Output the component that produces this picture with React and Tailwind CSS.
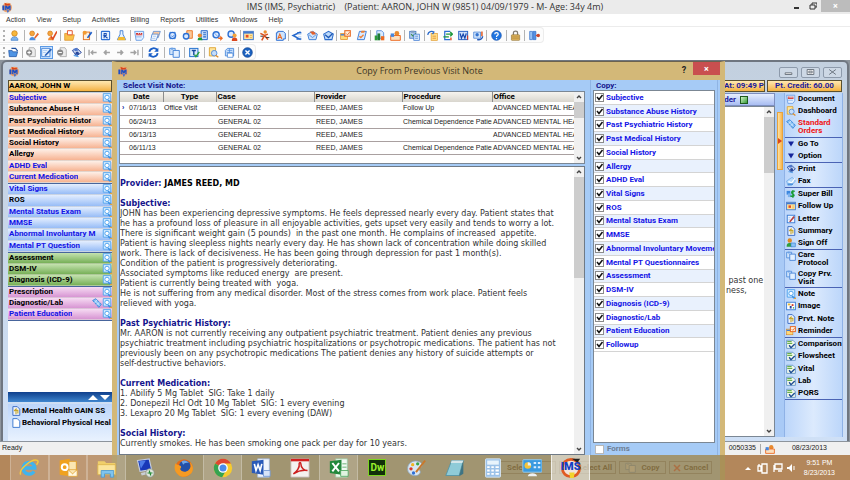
import React from "react";
import clsx from "clsx";

// 16x16 drawings shared by the toolbars, the side menu and the windows
const GLYPHS = {
  app: (
    <>
      <circle cx="9" cy="8" r="7" fill="#f2a46a" />
      <path d="M2 5h3v7H2zM6 5h3l1 3 1-3h3v7h-2V8l-1 3H9L8 8v4H6z" fill="#1d4fc4" />
      <path d="M5 1l4 2 5-1-2 3H6z" fill="#d8451c" />
      <path d="M8 12h4l-2 4z" fill="#2b6ad8" />
    </>
  ),
  person: (
    <>
      <circle cx="8" cy="5" r="4" fill="#f6b73c" stroke="#c77a12" />
      <path d="M3 15c0-4 2-5 5-5s5 1 5 5z" fill="#7db4ee" stroke="#3876c4" />
    </>
  ),
  personEdit: (
    <>
      <circle cx="6" cy="5" r="3.5" fill="#f6a53c" stroke="#d0761a" />
      <path d="M2 15c0-4 2-5 4-5s5 1 5 5z" fill="#4c8de0" />
      <path d="M9 11l5-7 2 2-6 7z" fill="#e8642a" />
    </>
  ),
  personCheck: (
    <>
      <circle cx="6" cy="5" r="3.5" fill="#f6a53c" stroke="#d0761a" />
      <path d="M3 15c0-4 2-5 4-5s4 1 4 5z" fill="#f08a34" />
      <path d="M7 9l3 4 6-11" fill="none" stroke="#df4d22" strokeWidth="2.4" />
    </>
  ),
  folder: (
    <>
      <path d="M1 5h5l1 2h8l-2 8H1z" fill="#f9c14a" stroke="#d98b1b" />
      <path d="M5 1h7v6H5z" fill="#fff" stroke="#e2552b" strokeWidth="1.4" />
    </>
  ),
  write: (
    <>
      <rect x="2" y="3" width="9" height="11" fill="#fff0dc" stroke="#e0762a" strokeWidth="1.4" />
      <circle cx="4" cy="4" r="3" fill="#f29b32" />
      <path d="M7 11l6-9 2 2-6 8z" fill="#1f5fc9" />
    </>
  ),
  rx: (
    <>
      <rect x="2" y="2" width="12" height="12" rx="1" fill="#e4f0ff" stroke="#2d70d4" strokeWidth="1.5" />
      <path d="M6 12V5h3v3H6l5 4" fill="none" stroke="#1b50b4" strokeWidth="1.5" />
    </>
  ),
  flask: (
    <>
      <path d="M6 1h4v5l4 8H2l4-8z" fill="#e6f2ff" stroke="#3a7ad4" strokeWidth="1.3" />
      <path d="M4 10h8l2 5H2z" fill="#f5b92e" />
    </>
  ),
  doc: (
    <>
      <path d="M1 2h13v9l-3 4H3z" fill="#e3efff" stroke="#5c94e0" strokeWidth="1.2" />
      <path d="M3 5h3M7 5h2M10 5h2M3 7h9" stroke="#d6342d" strokeWidth="1.6" />
      <path d="M3 10h8" stroke="#6c9fe4" />
    </>
  ),
  papers: (
    <>
      <path d="M5 2h10l-3 9H2z" fill="#f9c9a0" stroke="#3a7ad4" />
      <path d="M3 6h9l-3 9H1z" fill="#fff" stroke="#3a7ad4" />
      <path d="M4 9h5M3 12h5" stroke="#7aa9e6" />
    </>
  ),
  ring: (
    <>
      <path d="M4 3l8 10M12 3L4 13" stroke="#6ea4ea" strokeWidth="2.4" />
      <circle cx="8" cy="8" r="4.500" fill="#d9e9ff" stroke="#2d70d4" strokeWidth="2" />
      <path d="M6 8l2 2 3-3" fill="none" stroke="#2d70d4" strokeWidth="1.2" />
    </>
  ),
  ringPages: (
    <>
      <path d="M7 1h8v11H7z" fill="#fbc998" stroke="#ec7a2a" strokeWidth="1.4" />
      <circle cx="6" cy="9" r="4" fill="#d9e9ff" stroke="#2d70d4" strokeWidth="2" />
    </>
  ),
  ringArrow: (
    <>
      <circle cx="6" cy="7" r="4.500" fill="#d9e9ff" stroke="#2d70d4" strokeWidth="2" />
      <path d="M3 4l6 6" stroke="#6ea4ea" strokeWidth="1.4" />
      <path d="M9 11h3V8l4 4-4 4v-3H9z" fill="#ec6a22" />
    </>
  ),
  ringPerson: (
    <>
      <circle cx="6" cy="6" r="4.500" fill="#d9e9ff" stroke="#2d70d4" strokeWidth="2" />
      <circle cx="11" cy="8" r="3" fill="#f2a23c" />
      <path d="M7 16c0-4 1-5 4-5s4 1 4 5z" fill="#d9471f" />
    </>
  ),
  personChart: (
    <>
      <path d="M6 1h9v13H6z" fill="#cfe1fb" stroke="#2767c8" strokeWidth="1.4" />
      <path d="M9 4h4M9 7h4M9 10h4" stroke="#2767c8" strokeWidth="1.5" />
      <circle cx="4" cy="8" r="3" fill="#ec8a2d" />
      <path d="M1 15c0-3 1-4 3-4s4 1 4 4z" fill="#1d9b37" />
    </>
  ),
  calendar: (
    <>
      <rect x="1" y="2" width="14" height="12" fill="#ffe39a" stroke="#4179cf" strokeWidth="1.4" />
      <path d="M1 4h14" stroke="#4179cf" strokeWidth="2.5" />
      <rect x="4" y="7" width="4" height="4" fill="#e64b22" />
      <path d="M10 8h3M10 11h3" stroke="#e3a43a" />
    </>
  ),
  runner: (
    <>
      <circle cx="9" cy="3" r="2.5" fill="#ee8f30" />
      <path d="M2 5l6 3 5-2M8 8l-4 7M8 8l5 6" stroke="#d9511f" strokeWidth="2.2" fill="none" />
      <path d="M2 9h4M10 11h5" stroke="#333" strokeWidth="1.4" />
    </>
  ),
  letterA: (
    <>
      <path d="M4 2h8l3 3v8h-3v2H2V4h2z" fill="#cfe3fb" stroke="#2c6ed2" strokeWidth="1.4" />
      <path d="M4 13l3-7 3 7M5 11h4" stroke="#ec6a22" strokeWidth="1.6" fill="none" />
    </>
  ),
  chevron: (
    <>
      <path d="M14 3L3 8l11 6M9 4h6M8 13h7" fill="none" stroke="#2568cc" strokeWidth="2.2" />
      <path d="M10 6h5M10 10h5" stroke="#a5c8f4" strokeWidth="1.4" />
    </>
  ),
  envelope: (
    <>
      <path d="M1 6l7-4 7 4-2 8H3z" fill="#cfe3fb" stroke="#3477d2" strokeWidth="1.3" />
      <path d="M3 7l5 4 5-4" fill="none" stroke="#3477d2" />
      <path d="M4 2h6l3 4-5 1z" fill="#e5602a" />
    </>
  ),
  blueEnvelope: (
    <>
      <path d="M1 6l7-4 7 4-2 8H3z" fill="#bcd9fa" stroke="#2b6bcb" strokeWidth="1.5" />
      <path d="M3 7l5 4 6-6" fill="none" stroke="#1f58b4" strokeWidth="1.8" />
    </>
  ),
  reminder: (
    <>
      <rect x="1" y="5" width="10" height="9" fill="#ffd978" stroke="#d98823" />
      <path d="M1 7h10" stroke="#3d7bd6" strokeWidth="2" />
      <rect x="7" y="1" width="8" height="8" fill="#fff2e2" stroke="#e76a25" strokeWidth="1.6" />
      <path d="M9 5l2 2 3-4" fill="none" stroke="#e76a25" strokeWidth="1.3" />
    </>
  ),
  orangeDoc: (
    <>
      <path d="M5 2h10l-3 12H2z" fill="#d9e9ff" stroke="#3f7fd6" strokeWidth="1.4" />
      <path d="M8 1h5l-1 3H7z" fill="#ef7f33" />
      <path d="M5 9l2 2 4-4" fill="none" stroke="#ef7f33" strokeWidth="1.8" />
    </>
  ),
  chart: (
    <>
      <path d="M4 1h7l3 3v8H4z" fill="#d9e9ff" stroke="#3271cf" />
      <path d="M1 15V8h4v7z" fill="#2d9b3a" />
      <path d="M5 15V5h4v10z" fill="#1d7b37" />
      <path d="M10 15V9h5v6z" fill="#ec6a22" />
    </>
  ),
  sign: (
    <>
      <circle cx="10" cy="5" r="3.500" fill="#e88a2e" />
      <path d="M1 8h14v7H1z" fill="#fbe0c0" stroke="#ec6a22" strokeWidth="1.400" />
      <path d="M1 5h5v5H1z" fill="#4687de" />
    </>
  ),
  clipboard: (
    <>
      <rect x="1" y="2" width="9" height="10" fill="#b4cdee" stroke="#4d7fc4" strokeWidth="1.300" />
      <rect x="3" y="1" width="5" height="3" fill="#7e9bc0" />
      <path d="M3 6l3 3 4-4" fill="none" stroke="#3d8f4a" strokeWidth="1.500" />
      <rect x="7" y="6" width="8" height="9" fill="#d5e7fc" stroke="#2f70cf" />
      <path d="M9 9h4M9 12h4" stroke="#2f70cf" />
    </>
  ),
  importDoc: (
    <>
      <rect x="6" y="5" width="9" height="10" fill="#ffe08a" stroke="#e29a28" />
      <path d="M1 7c1-5 6-6 9-4L8 6" fill="none" stroke="#2b6bcb" strokeWidth="2" />
      <path d="M8 9h5M8 12h5" stroke="#d97d22" />
    </>
  ),
  swap: (
    <>
      <path d="M12 2H4v12h8" fill="none" stroke="#2d70d4" strokeWidth="1.800" />
      <path d="M6 6h8M2 10h8M12 3l3 3-3 3" fill="none" stroke="#1c963a" strokeWidth="2" />
      <path d="M13 11v4" stroke="#e04c22" strokeWidth="2" />
    </>
  ),
  word: (
    <>
      <rect x="1" y="2" width="13" height="12" fill="#cfe1fb" stroke="#2a62c4" strokeWidth="1.4" />
      <path d="M3 5l2 7 2.500-6 2.500 6 2-7" fill="none" stroke="#1747ac" strokeWidth="1.8" />
      <path d="M14 8v6" stroke="#d83a22" strokeWidth="1.6" />
    </>
  ),
  fee: (
    <>
      <path d="M1 3h10v9H1z" fill="#cfe3fb" stroke="#3474d0" />
      <circle cx="6" cy="7" r="2.5" fill="#3474d0" />
      <path d="M13 9V2" stroke="#e35c24" strokeWidth="2.2" />
      <path d="M6 14c5 1 8-2 8-5" fill="none" stroke="#2458b8" strokeWidth="2" />
    </>
  ),
  help: (
    <>
      <circle cx="8" cy="8" r="7" fill="#1f74e0" stroke="#1450ae" />
      <path d="M5.500 6c0-3 5-3 5 0 0 2-2.500 1.500-2.500 4M8 11.500v2" fill="none" stroke="#fff" strokeWidth="1.8" />
    </>
  ),
  lock: (
    <>
      <path d="M5 8V4c0-3 6-3 6 0v4" fill="none" stroke="#7f7a70" strokeWidth="1.8" />
      <rect x="2" y="7" width="12" height="8" rx="1" fill="#e0b45c" stroke="#94763a" />
      <path d="M3 10h10M3 12h10" stroke="#b08a3c" />
    </>
  ),
  exit: (
    <>
      <path d="M1 2h4v12H1z" fill="#9cc4f4" stroke="#2b6bcb" />
      <path d="M6 2h4v12H6z" fill="#5591e2" stroke="#2b6bcb" />
      <path d="M10 8h3" stroke="#e04c22" strokeWidth="2" />
      <circle cx="13.500" cy="8" r="2.500" fill="#c9472c" />
    </>
  ),
  openBlue: (
    <>
      <path d="M1 5h5l1 2h7l-2 7H2z" fill="#4f94e4" stroke="#1c4f9f" />
      <path d="M5 2h6l3 4" fill="none" stroke="#1c4f9f" strokeWidth="1.6" />
    </>
  ),
  grayPlus: (
    <>
      <path d="M6 1h7l2 3v10H6z" fill="#ececec" stroke="#9b9b9b" />
      <circle cx="6" cy="8" r="4.500" fill="#8a8a8a" />
      <path d="M3.500 8h5M6 5.500v5" stroke="#fff" strokeWidth="1.5" />
    </>
  ),
  grayMinus: (
    <>
      <path d="M6 1h7l2 3v10H6z" fill="#ececec" stroke="#9b9b9b" />
      <circle cx="6" cy="8" r="4.500" fill="#8a8a8a" />
      <path d="M3.500 8h5" stroke="#fff" strokeWidth="1.5" />
    </>
  ),
  edit: (
    <>
      <path d="M1 2h12v12H1z" fill="#e9f3ff" stroke="#4484d8" strokeWidth="1.3" />
      <path d="M3 5h6M3 8h4" stroke="#94bcec" />
      <path d="M5 12L14 2l2 2-9 9z" fill="#2c63b8" />
    </>
  ),
  print: (
    <>
      <path d="M2 5l7-3 6 6-7 5z" fill="#d4def0" stroke="#27479c" strokeWidth="1.4" />
      <path d="M3 3l5-2 3 4-5 1z" fill="#4f78cc" />
      <circle cx="9" cy="9" r="2.500" fill="#27479c" />
      <path d="M4 12l7 2" stroke="#59a0e8" strokeWidth="2" />
    </>
  ),
  first: <path d="M3 4v8M14 8H6M9 5L6 8l3 3" fill="none" stroke="#a2a2a2" strokeWidth="2" />,
  prev: <path d="M13 8H5M8 5L5 8l3 3" fill="none" stroke="#a2a2a2" strokeWidth="2.4" />,
  next: <path d="M3 8h8M8 5l3 3-3 3" fill="none" stroke="#a2a2a2" strokeWidth="2.4" />,
  last: <path d="M13 4v8M2 8h8M7 5l3 3-3 3" fill="none" stroke="#a2a2a2" strokeWidth="2" />,
  refresh: (
    <>
      <path d="M2 7c1-6 9-7 12-2M14 9c-1 6-9 7-12 2" fill="none" stroke="#1a5fc8" strokeWidth="2.6" />
      <path d="M15 1v6H9zM1 15V9h6z" fill="#1a5fc8" />
    </>
  ),
  copy: (
    <>
      <path d="M1 2h8v9H1z" fill="#cfe3fb" stroke="#4a8adb" strokeWidth="1.3" />
      <path d="M6 5h9v10H6z" fill="#e3f0ff" stroke="#3c7dd4" strokeWidth="1.3" />
      <path d="M3 1h3v3H3z" fill="#6ea3e6" />
    </>
  ),
  template: (
    <>
      <rect x="1" y="2" width="12" height="12" fill="#dceafc" stroke="#1f6fcd" strokeWidth="1.4" />
      <path d="M4 5h6M7 5v7" stroke="#14489c" strokeWidth="2" />
      <path d="M8 11l2 3 5-7" fill="none" stroke="#27a03a" strokeWidth="2" />
    </>
  ),
  dash: (
    <>
      <path d="M2 1h9v12H2z" fill="#ffe59a" stroke="#dca32f" strokeWidth="1.3" />
      <circle cx="9" cy="9" r="4" fill="#c6defa" stroke="#4b88da" strokeWidth="1.3" />
      <path d="M11 12l4 3" stroke="#e08c25" strokeWidth="2" />
    </>
  ),
  globeDoc: (
    <>
      <path d="M5 2h9v11H2V5z" fill="#c3dcfa" stroke="#4c8adb" strokeWidth="1.3" />
      <path d="M5 5h7M4 8h8M8 2v6" stroke="#4c8adb" />
      <path d="M5 9h8v6H5z" fill="#fff" stroke="#3c7dd4" />
    </>
  ),
  closeBall: (
    <>
      <circle cx="8" cy="8" r="7" fill="#1b62c0" stroke="#0d3f8c" />
      <path d="M5 5l6 6M11 5l-6 6" stroke="#fff" strokeWidth="2" />
    </>
  ),
  note: (
    <>
      <path d="M2 1h12v12H2z" fill="#d5ecff" stroke="#4aa0ee" strokeWidth="1.4" />
      <circle cx="8" cy="7" r="3.500" fill="#fff" stroke="#4aa0ee" strokeWidth="1.5" />
      <path d="M10 11l2 3h3" stroke="#3a8fe4" strokeWidth="2.400" fill="none" />
      <path d="M13 15h3" stroke="#e6a43a" strokeWidth="2" />
    </>
  ),
  capsule: (
    <>
      <path d="M1 4l5-3 9 9-4 5z" fill="#7cb9f2" stroke="#2f7fd6" strokeWidth="1.2" />
      <path d="M5 4l7 8M8 3l-4 5M12 7l-5 4" stroke="#e4f2ff" strokeWidth="1.1" />
    </>
  ),
  down: <path d="M2 3h12L8 13z" fill="#14249a" />,
  fax: (
    <>
      <path d="M1 8l9-6 5 6-6 7H3z" fill="#b9dbfb" stroke="#5f9fe4" />
      <path d="M4 9l5 2 5-7" fill="none" stroke="#fff" strokeWidth="1.8" />
      <path d="M3 13h8" stroke="#2d7bd2" strokeWidth="2" />
    </>
  ),
  bill: (
    <>
      <path d="M1 3h6v6H1z" fill="#3b86df" />
      <path d="M3 7h6v6H3z" fill="#7db2ee" />
      <path d="M14 4c-4-3-7 2-3 4s1 5-4 3M11 2v12" fill="none" stroke="#179c34" strokeWidth="2.200" />
    </>
  ),
  letter: (
    <>
      <rect x="2" y="2" width="12" height="12" fill="#f0f6ff" stroke="#3c7dd4" strokeWidth="1.5" />
      <path d="M5 12l7-9 2 2-7 8z" fill="#b53e3e" />
      <path d="M4 6h3M4 9h2" stroke="#86afe6" />
    </>
  ),
  summary: (
    <>
      <path d="M3 1h7l4 4v10H3z" fill="#eef4ff" stroke="#2d62c0" strokeWidth="1.4" />
      <path d="M5 8l3-3v8M8 7h3v5" fill="none" stroke="#c4a62c" strokeWidth="1.8" />
    </>
  ),
  signOff: (
    <>
      <circle cx="6" cy="4" r="3.500" fill="#e08a24" />
      <path d="M1 14c0-5 2-6 5-6s4 1 4 6z" fill="#2f9e3c" />
      <path d="M8 8h7v6H8z" fill="#8ac3f5" stroke="#3a7fd6" />
    </>
  ),
  image: (
    <>
      <rect x="1" y="2" width="14" height="12" fill="#fff" stroke="#3c7dd4" strokeWidth="1.5" />
      <path d="M3 4h4v3H3z" fill="#e9b830" />
      <path d="M9 5h3v3H9z" fill="#d43d2c" />
      <path d="M6 8h3v4H6z" fill="#243e9c" />
      <path d="M11 10h2v2h-2z" fill="#31a04a" />
    </>
  ),
  sheet: (
    <>
      <path d="M1 2h10l4 4v9H1z" fill="#f2f9ec" stroke="#5a8fc4" strokeWidth="1.3" />
      <path d="M2 4h7M2 7h8" stroke="#69b04c" strokeWidth="1.8" />
      <path d="M5 10l3 4 6-6" fill="none" stroke="#1d4b94" strokeWidth="2.200" />
    </>
  ),
  page: <path d="M3 1h7l4 4v10H3z" fill="#fff" stroke="#3a78d0" strokeWidth="1.5" />,
};

function Glyph({ name, className = "size-[11px]" }) {
  return (
    <svg viewBox="0 0 16 16" className={clsx("shrink-0", className)} aria-hidden="true">
      {GLYPHS[name]}
    </svg>
  );
}

const MENUS = ["Action", "View", "Setup", "Activities", "Billing", "Reports", "Utilities", "Windows", "Help"];

const MAIN_TOOLS = [
  { width: "w-[20px]", icons: ["person"] },
  { width: "w-[36px]", icons: ["personEdit", "personCheck"] },
  { width: "w-[36px]", icons: ["folder", "write"] },
  { width: "w-[34px]", icons: ["rx", "flask"] },
  { width: "w-[34px]", icons: ["doc", "papers"] },
  { width: "w-[76px]", icons: ["ring", "ringPages", "personChart", "ringArrow", "ringPerson"] },
  { width: "w-[48px]", icons: ["calendar", "runner", "letterA"] },
  { width: "w-[48px]", icons: ["chevron", "envelope", "blueEnvelope"] },
  { width: "w-[34px]", icons: ["reminder", "orangeDoc"] },
  { width: "w-[34px]", icons: ["chart", "sign"] },
  { width: "w-[20px]", icons: ["clipboard"] },
  { width: "w-[62px]", icons: ["importDoc", "swap", "word", "fee"] },
  { width: "w-[20px]", icons: ["help"] },
  { width: "w-[18px]", icons: ["lock"] },
  { width: "w-[18px]", icons: ["exit"] },
];

const NOTE_TOOLS = [
  { width: "w-[18px]", icons: ["openBlue"] },
  { width: "w-[62px]", icons: ["grayPlus", "edit", "grayMinus", "print"] },
  { width: "w-[58px]", icons: ["first", "prev", "next", "last"] },
  { width: "w-[22px]", icons: ["refresh"] },
  { width: "w-[20px]", icons: ["copy"] },
  { width: "w-[20px]", icons: ["template"] },
  { width: "w-[34px]", icons: ["dash", "globeDoc"] },
  { width: "w-[16px]", icons: ["closeBall"] },
];

const SECTIONS = [
  {
    height: "h-[91px]",
    shade: "from-[#fdf0e8] to-[#f6b392]",
    items: [
      ["Subjective", true],
      ["Substance Abuse H"],
      ["Past Psychiatric Histor"],
      ["Past Medical History"],
      ["Social History"],
      ["Allergy"],
      ["ADHD Eval", true],
      ["Current Medication", true],
    ],
  },
  {
    height: "h-[69px]",
    shade: "from-[#e4eefe] to-[#97bcf6]",
    items: [
      ["Vital Signs", true],
      ["ROS"],
      ["Mental Status Exam", true],
      ["MMSE", true],
      ["Abnormal Involuntary M", true],
      ["Mental PT Question", true],
    ],
  },
  {
    height: "h-[34px]",
    shade: "from-[#c5e2af] to-[#77b057]",
    items: [["Assessment"], ["DSM-IV"], ["Diagnosis (ICD-9)"]],
  },
  {
    height: "h-[34px]",
    shade: "from-[#f6dcf3] to-[#d795d3]",
    items: [["Prescription"], ["Diagnostic/Lab"], ["Patient Education", true]],
  },
];

const SIDE_MENU = [
  { height: "h-[45px]", items: [["doc", "Document"], ["dash", "Dashboard"], ["capsule", "Standard Orders", "tall"]] },
  { height: "h-[25px]", items: [["down", "Go To"], ["down", "Option"]] },
  { height: "h-[25px]", items: [["print", "Print"], ["fax", "Fax"]] },
  {
    height: "h-[62px]",
    items: [["bill", "Super Bill"], ["calendar", "Follow Up"], ["letter", "Letter"], ["summary", "Summary"], ["signOff", "Sign Off"]],
  },
  { height: "h-[38px]", items: [["copy", "Care Protocol", "tall"], ["copy", "Copy Prv. Visit", "tall"]] },
  { height: "h-[50px]", items: [["note", "Note"], ["image", "Image"], ["summary", "Prvt. Note"], ["reminder", "Reminder"]] },
  {
    height: "h-[62px]",
    items: [["sheet", "Comparison"], ["sheet", "Flowsheet"], ["sheet", "Vital"], ["sheet", "Lab"], ["sheet", "PQRS"]],
  },
];

const VISITS = [
  { date: "07/16/13", type: "Office Visit", procedure: "Follow Up", current: true },
  { date: "06/24/13", type: "", procedure: "Chemical Dependence Patier" },
  { date: "06/13/13", type: "", procedure: "" },
  { date: "06/11/13", type: "", procedure: "Chemical Dependence Patier" },
];

const COPY_ITEMS = [
  "Subjective",
  "Substance Abuse History",
  "Past Psychiatric History",
  "Past Medical History",
  "Social History",
  "Allergy",
  "ADHD Eval",
  "Vital Signs",
  "ROS",
  "Mental Status Exam",
  "MMSE",
  "Abnormal Involuntary Movemer",
  "Mental PT Questionnaires",
  "Assessment",
  "DSM-IV",
  "Diagnosis (ICD-9)",
  "Diagnostic/Lab",
  "Patient Education",
  "Followup",
];

const NOTE = [
  {
    title: "Subjective:",
    lines: [
      "JOHN has been experiencing depressive symptoms. He feels depressed nearly every day. Patient states that",
      "he has a profound loss of pleasure in all enjoyable activities, gets upset very easily and tends to worry a lot.",
      "There is significant weight gain (5 pounds)  in the past one month. He complains of increased  appetite.",
      "Patient is having sleepless nights nearly every day. He has shown lack of concentration while doing skilled",
      "work. There is lack of decisiveness. He has been going through depression for past 1 month(s).",
      "Condition of the patient is progressively deteriorating.",
      "Associated symptoms like reduced energy  are present.",
      "Patient is currently being treated with  yoga.",
      "He is not suffering from any medical disorder. Most of the stress comes from work place. Patient feels",
      "relieved with yoga.",
    ],
  },
  {
    title: "Past Psychiatric History:",
    lines: [
      "Mr. AARON is not currently receiving any outpatient psychiatric treatment. Patient denies any previous",
      "psychiatric treatment including psychiatric hospitalizations or psychotropic medications. The patient has not",
      "previously been on any psychotropic medications The patient denies any history of suicide attempts or",
      "self-destructive behaviors.",
    ],
  },
  {
    title: "Current Medication:",
    lines: [
      "1. Abilify 5 Mg Tablet  SIG: Take 1 daily",
      "2. Donepezil Hcl Odt 10 Mg Tablet  SIG: 1 every evening",
      "3. Lexapro 20 Mg Tablet  SIG: 1 every evening (DAW)",
    ],
  },
  {
    title: "Social History:",
    lines: ["Currently smokes. He has been smoking one pack per day for 10 years."],
  },
];

function Toolbar({ groups, active }) {
  return (
    <div className="flex h-[16px] w-fit items-center rounded-r-sm border border-l-0 border-[#ececec] bg-[#fcfcfc] pl-[3px]">
      <span className="h-[11px] border-l-2 border-dotted border-[#b0b0b0]" />
      {groups.map((group, i) => (
        <div
          key={i}
          className={clsx(
            "flex h-[11px] items-center justify-around",
            group.width,
            i < groups.length - 1 && "border-r border-[#b4b4b4]"
          )}
        >
          {group.icons.map((icon, j) => (
            <button
              key={j}
              type="button"
              aria-label={icon}
              className={clsx(icon === active && "border border-[#5b9be6] bg-[#cfe5ff]")}
            >
              <Glyph name={icon} />
            </button>
          ))}
        </div>
      ))}
    </div>
  );
}

function Arrow({ up }) {
  return (
    <svg viewBox="0 0 10 10" className="size-[10px] shrink-0" aria-hidden="true">
      <path d={up ? "M3 6l2-2 2 2" : "M3 4l2 2 2-2"} fill="none" stroke="#444" strokeWidth="1.4" />
    </svg>
  );
}

function Scrollbar({ thumb }) {
  return (
    <div className="flex w-[10px] shrink-0 flex-col bg-[#f0f0f0]">
      <Arrow up />
      <div className={clsx("bg-[#cdcdcd]", thumb)} />
      <div className="flex-1" />
      <Arrow />
    </div>
  );
}

function Tick({ id, checked, faded }) {
  return (
    <span className="grid size-[9px] shrink-0">
      <input
        id={id}
        type="checkbox"
        defaultChecked={checked}
        className={clsx(
          "peer col-start-1 row-start-1 size-[9px] appearance-none border bg-white",
          faded ? "border-[#b8b8b8]" : "border-[#8a8a8a]"
        )}
      />
      <svg viewBox="0 0 9 9" className="pointer-events-none invisible col-start-1 row-start-1 size-[9px] peer-checked:visible">
        <path d="M2 4l2 2.500L7.500 2" fill="none" stroke="#111" strokeWidth="1.500" />
      </svg>
    </span>
  );
}

function SectionNav() {
  return (
    <aside className="flex w-[104px] shrink-0 flex-col">
      <div className="h-[12px] border border-[#5a5030] bg-linear-to-b from-[#ffe9b0] to-[#f3b13c] leading-[10px] whitespace-nowrap text-black">
        AARON, JOHN W
      </div>
      <nav className="mt-px flex flex-1 flex-col bg-white">
        {SECTIONS.map((section) => (
          <div key={section.shade} className={clsx("grid auto-rows-fr border-b border-[#47659c]", section.height)}>
            {section.items.map(([label, filled]) => (
              <a
                key={label}
                href="#"
                className={clsx(
                  "flex items-center justify-between border-b border-black/10 bg-linear-to-b pl-px",
                  section.shade,
                  filled ? "text-[#1414e6]" : "text-black"
                )}
              >
                <span className="max-w-[92px] overflow-hidden leading-[10px] whitespace-nowrap">{label}</span>
                <span className="flex">
                  {label === "Diagnostic/Lab" && <Glyph name="capsule" className="size-[10px]" />}
                  <Glyph name="note" className="size-[10px]" />
                </span>
              </a>
            ))}
          </div>
        ))}
      </nav>
      <div className="flex h-[10px] items-center justify-end bg-linear-to-b from-[#0f3f8c] to-[#3f86cf] pr-[2px]">
        <svg viewBox="0 0 22 6" className="h-[6px] w-[22px]" aria-hidden="true">
          <path d="M0 6l5-5 5 5zM12 1h10l-5 5z" fill="#fff" />
        </svg>
      </div>
      <div className="mt-[2px] flex h-[37px] flex-col gap-px bg-linear-to-b from-[#bdd6fa] to-[#e9f2fe] pt-px pl-[3px] leading-[11px] text-black">
        <a href="#" className="flex items-center gap-px whitespace-nowrap">
          <Glyph name="summary" className="size-[10px]" />
          Mental Health GAIN SS
        </a>
        <a href="#" className="flex items-center gap-px whitespace-nowrap">
          <Glyph name="page" className="size-[10px]" />
          Behavioral Physical Heal
        </a>
      </div>
    </aside>
  );
}

function SideMenu() {
  return (
    <aside className="flex w-[67px] shrink-0 bg-[#a9caf6]">
      <div className="w-[9px] shrink-0 pt-[19px] pl-[2px]">
        <div className="flex h-[58px] w-[6px] items-center border border-[#e8a33c] bg-linear-to-r from-[#ffe2a0] to-[#f7b54a]">
          <svg viewBox="0 0 4 6" className="h-[6px] w-[4px]" aria-hidden="true">
            <path d="M0 0l4 3-4 3z" fill="#d8451c" />
          </svg>
        </div>
      </div>
      <nav className="flex-1 border-x border-[#8fb2e6] bg-linear-to-r from-[#bcd6fa] via-[#dceafd] to-[#bcd6fa]">
        {SIDE_MENU.map((group, i) => (
          <div key={i} className={clsx("flex flex-col border-b border-[#4a63b4]", group.height)}>
            {group.items.map(([icon, label, tall]) => (
              <a
                key={label}
                href="#"
                className={clsx(
                  "flex gap-[2px] pl-px leading-[8px]",
                  tall ? "flex-3 items-start pt-px" : "flex-2 items-center",
                  label === "Standard Orders" ? "text-[#f01414]" : "text-black"
                )}
              >
                <Glyph name={icon} className={icon === "down" ? "mx-px size-[8px]" : "size-[10px]"} />
                <span className={tall ? "w-[38px]" : "whitespace-nowrap"}>{label}</span>
              </a>
            ))}
          </div>
        ))}
      </nav>
    </aside>
  );
}

function ChartWindow() {
  return (
    <section className="flex flex-1 flex-col rounded-t-md border-2 border-b-0 border-[#6f7680] bg-linear-to-b from-[#c3d0df] to-[#cfe0f6] px-[5px] font-bold">
      <header className="flex h-[18px] shrink-0 items-center justify-between">
        <Glyph name="app" />
        <div className="flex gap-[3px] pt-[2px]">
          {["M5 7h8v2H5z", "M5 3h8v6H5zM7 5h4v2H7z", "M5 3l8 6M13 3l-8 6"].map((d) => (
            <button
              key={d}
              type="button"
              aria-label="window control"
              className="flex h-[11px] w-[19px] items-center justify-center rounded-xs border border-[#8d9aab] bg-[#cdd8e5]"
            >
              <svg viewBox="0 0 18 12" className="h-[10px] w-[15px]">
                <path d={d} fill="#f4f4f4" stroke="#5c6570" />
              </svg>
            </button>
          ))}
        </div>
      </header>
      <div className="flex flex-1">
        <SectionNav />
        <div className="flex min-w-0 flex-1 flex-col">
          <div className="flex h-[12px] justify-end gap-[2px] leading-[10px] whitespace-nowrap text-[#1c1c9c]">
            <div className="w-[50px] border border-[#5a5030] bg-linear-to-b from-[#ffe9b0] to-[#f3b13c] text-right">At: 09:49 P</div>
            <div className="w-[75px] border border-[#5a5030] bg-linear-to-b from-[#ffe9b0] to-[#f3b13c] text-center">Pt. Credit: 60.00</div>
          </div>
          <div className="mt-px flex flex-1">
            <div className="flex flex-1 flex-col">
              <div className="flex h-[13px] items-center justify-end gap-[4px] border border-[#7d8fc0] bg-linear-to-b from-[#e6eefe] to-[#a9bdf2] pr-[26px] text-[#1c1c9c]">
                der
                <span className="size-[8px] border border-[#1d5a1d] bg-linear-to-br from-[#d0f4c8] to-[#2c9c34]" />
              </div>
              <div className="flex flex-1 border border-[#7b8794] bg-white">
                <div className="flex flex-1 justify-end pt-[169px] font-[family-name:'DejaVu_Sans'] text-[8px]/[10px] font-normal text-[#333]">
                  <p className="w-[38px] whitespace-pre">{" past one\nness,"}</p>
                </div>
                <Scrollbar thumb="h-[56px]" />
              </div>
            </div>
            <SideMenu />
          </div>
          <div className="h-[4px]" />
        </div>
      </div>
    </section>
  );
}

function VisitTable() {
  return (
    <div className="flex h-[73px] border border-[#7b8794] bg-white">
      <div className="flex-1 overflow-hidden">
        <table className="w-full table-fixed border-collapse leading-[10px] whitespace-nowrap text-[#222]">
          <thead className="bg-linear-to-b from-[#f6f4ef] to-[#d9d6ce] text-left text-black">
            <tr>
              <th className="w-[43px] border-r border-[#8c8c8c] text-center">Date</th>
              <th className="w-[53px] border-r border-[#8c8c8c] text-center">Type</th>
              <th className="w-[98px] border-r border-[#8c8c8c] pl-px">Case</th>
              <th className="w-[88px] border-r border-[#8c8c8c] pl-px">Provider</th>
              <th className="w-[90px] border-r border-[#8c8c8c] pl-px">Procedure</th>
              <th className="pl-px">Office</th>
            </tr>
          </thead>
          <tbody className="font-[family-name:'Liberation_Sans'] text-[7px]">
            {VISITS.map((visit) => (
              <tr key={visit.date} className="h-[13px] border-b border-[#a9a0a0]">
                <td>
                  <span className="flex">
                    <span className="w-[9px] pl-[2px] font-bold text-[#14249a]">{visit.current ? "›" : ""}</span>
                    {visit.date}
                  </span>
                </td>
                <td className="pl-px">{visit.type}</td>
                <td className="pl-[2px]">GENERAL 02</td>
                <td className="pl-[2px]">REED, JAMES</td>
                <td className="overflow-hidden pl-px">{visit.procedure}</td>
                <td className="overflow-hidden pl-px">ADVANCED MENTAL HEA</td>
              </tr>
            ))}
          </tbody>
        </table>
      </div>
      <Scrollbar thumb="h-[16px]" />
    </div>
  );
}

function CopyDialog() {
  return (
    <section
      role="dialog"
      aria-label="Copy From Previous Visit Note"
      className="absolute top-[61px] right-[125px] bottom-0 left-[112px] flex flex-col border-x-[5px] border-t border-[#d3b878] border-t-[#6b6250] bg-[#a6cbf6]"
    >
      <header className="flex h-[18px] shrink-0 items-center bg-[#d3b878]">
        <Glyph name="app" />
        <h2 className="flex-1 pl-[36px] text-center font-[family-name:'Open_Sans'] text-[9px] text-[#3c3526]">
          Copy From Previous Visit Note
        </h2>
        <button type="button" aria-label="help" className="w-[18px] text-[9px] font-bold text-[#222]">
          ?
        </button>
        <button type="button" aria-label="close" className="mb-[5px] h-[13px] w-[27px] bg-[#c94f4f] text-[9px]/[12px] font-bold text-white">
          ×
        </button>
      </header>
      <div className="flex min-h-0 flex-1 gap-[5px] px-[2px]">
        <div className="flex min-w-0 flex-1 flex-col">
          <h3 className="h-[11px] pl-[4px] leading-[11px] font-bold text-[#14148c]">Select Visit Note:</h3>
          <VisitTable />
          <div className="mt-[2px] flex min-h-0 flex-1 border border-[#6f7a86] bg-white">
            <article className="min-w-0 flex-1 overflow-hidden pt-[12px] font-[family-name:'DejaVu_Sans'] text-[8px]/[10px] whitespace-pre text-[#333]">
              <p className="font-bold text-black">
                <span className="text-[#14148c]">Provider:</span> JAMES REED, MD
              </p>
              {NOTE.map((part) => (
                <div key={part.title} className="mt-[10px]">
                  <h4 className="font-bold text-[#14148c]">{part.title}</h4>
                  {part.lines.map((line) => (
                    <p key={line}>{line}</p>
                  ))}
                </div>
              ))}
            </article>
            <Scrollbar thumb="h-[101px]" />
          </div>
        </div>
        <div className="flex w-[128px] shrink-0 flex-col border-x border-[#8fb4e4] px-[2px] font-bold text-[#1414e6]">
          <h3 className="h-[10px] pl-[3px] leading-[11px] text-[#14148c]">Copy:</h3>
          <div className="flex-1 border border-[#7b8794] bg-white">
            <ul className="grid h-[261px] auto-rows-fr">
              {COPY_ITEMS.map((item, i) => (
                <li key={item} className="flex items-center gap-[2px] overflow-hidden border-b border-[#d4d4d4] pl-px even:bg-[#e9f1fd]">
                  <Tick id={`copy-${i}`} checked />
                  <label htmlFor={`copy-${i}`} className="leading-[11px] whitespace-nowrap">
                    {item}
                  </label>
                </li>
              ))}
            </ul>
          </div>
          <div className="flex h-[12px] items-center gap-[3px] pl-[2px] text-[#6f7f94]">
            <Tick id="copy-forms" faded />
            <label htmlFor="copy-forms">Forms</label>
          </div>
        </div>
      </div>
      <footer className="flex h-[25px] shrink-0 items-center justify-end gap-[3px] pr-[8px] font-bold text-black">
        <button type="button" className="h-[13px] w-[60px] border border-[#5f7390] pl-[10px] text-left leading-[11px]">
          Select
        </button>
        <button type="button" className="flex h-[13px] w-[57px] items-center justify-end gap-[2px] border border-[#5f7390] pr-[3px]">
          <Glyph name="page" />
          Select All
        </button>
        <button type="button" className="flex h-[13px] w-[47px] items-center justify-center gap-[5px] border border-[#5f7390]">
          <Glyph name="copy" />
          Copy
        </button>
        <button type="button" className="flex h-[13px] w-[43px] items-center justify-center gap-[3px] border border-[#5f7390]">
          <svg viewBox="0 0 8 8" className="size-[8px]">
            <path d="M1 1l6 6M7 1L1 7" stroke="#d41414" strokeWidth="1.500" />
          </svg>
          Cancel
        </button>
      </footer>
    </section>
  );
}

// 24x24 drawings of the pinned programs
const PROGRAMS = [
  {
    name: "Internet Explorer",
    pinned: true,
    art: (
      <>
        <path d="M18 16a7 7 0 1 1 1-4H7" fill="none" stroke="#3fb4ee" strokeWidth="4" />
        <path d="M2 20C-1 14 16 0 22 3c2 1 0 4-1 5" fill="none" stroke="#f4c93c" strokeWidth="1.800" />
      </>
    ),
  },
  {
    name: "Outlook",
    pinned: true,
    art: (
      <>
        <path d="M2 3l12-2v21L2 20z" fill="#f0a21e" />
        <path d="M13 4h9v15h-9z" fill="#fbe6b2" stroke="#e29a1e" />
        <circle cx="8" cy="11" r="3.500" fill="none" stroke="#fff" strokeWidth="2.400" />
        <path d="M12 14h11v8H12zl5.500 5L23 14" fill="#fff8e0" stroke="#e2a63c" />
      </>
    ),
  },
  {
    name: "Explorer",
    pinned: true,
    art: (
      <>
        <path d="M1 4h8l2 2h11v13H1z" fill="#f0cf6a" />
        <path d="M1 8h21v12H1z" fill="#fbe59c" stroke="#dcb44a" />
        <path d="M5 23v-8h15v8h-4v-4H9v4z" fill="#7fc4ee" stroke="#4a98cf" />
      </>
    ),
  },
  {
    name: "Remote Desktop",
    art: (
      <>
        <path d="M3 3l14-2 3 13-14 2z" fill="#1838b8" stroke="#c4cde0" strokeWidth="1.400" />
        <path d="M5 4l8-1-6 10z" fill="#4d7be8" />
        <path d="M7 18l9-2 1 3-9 2z" fill="#c9ced6" />
        <circle cx="18" cy="18" r="5" fill="#dfe6dc" stroke="#8a938a" />
        <path d="M15 18h3l-1-3M21 18h-3l1 3" stroke="#238a34" fill="none" strokeWidth="1.400" />
      </>
    ),
  },
  {
    name: "Firefox",
    art: (
      <>
        <circle cx="12" cy="12" r="10.500" fill="#e66a16" />
        <circle cx="13" cy="10" r="7" fill="#2450a8" />
        <path d="M2 6c0 2 3 2 5 3 3 1 1 4 0 4 2 4 7 5 11 1 3-3 2-7 1-9 4 3 5 9 2 13-4 5-12 6-16 2C0 16 0 10 2 6z" fill="#f59a22" />
        <path d="M9 4c3-2 7-1 9 2-3-1-6 0-7 2z" fill="#6fa5e8" />
      </>
    ),
  },
  {
    name: "Chrome",
    pinned: true,
    art: (
      <>
        <circle cx="12" cy="12" r="11" fill="#f6cb2e" />
        <path d="M12 12L2.500 6.500A11 11 0 0 1 21.500 6.500H12z" fill="#dd4632" />
        <path d="M2.500 6.500A11 11 0 0 0 11 23l5-9-4-2z" fill="#35a350" />
        <circle cx="12" cy="12" r="5" fill="#4a8bea" stroke="#fff" strokeWidth="1.600" />
      </>
    ),
  },
  {
    name: "Word",
    art: (
      <>
        <path d="M8 1h14v22H8z" fill="#f1f5fc" stroke="#a4b8da" />
        <path d="M1 4l14-2v18L1 18z" fill="#2a5ab8" />
        <path d="M4 7l2 8 2.500-7L11 15l2-8" fill="none" stroke="#fff" strokeWidth="2" />
        <path d="M15 15h8v7h-8z" fill="#d7e4f8" stroke="#6d94d0" />
      </>
    ),
  },
  {
    name: "Acrobat",
    art: (
      <>
        <path d="M1 1h22v22H1z" fill="#f4f1ef" stroke="#b9aca6" />
        <path d="M1 1h22v3H1z" fill="#d42020" />
        <path d="M4 19c4-2 8-8 7-12 0-2 2-2 2 0 0 5 4 8 8 8-6-1-12 1-17 4z" fill="none" stroke="#cc1f1f" strokeWidth="1.800" />
      </>
    ),
  },
  {
    name: "Excel",
    pinned: true,
    art: (
      <>
        <path d="M8 1h14v22H8z" fill="#f1faf1" stroke="#9dc8a4" />
        <path d="M1 4l14-2v18L1 18z" fill="#23883c" />
        <path d="M4 6l8 10M12 6L4 16" stroke="#fff" strokeWidth="2.400" />
        <path d="M16 7h5M16 11h5M14 15h9v7h-9z" stroke="#4fa65f" fill="#e0f3e0" />
      </>
    ),
  },
  { name: "Dreamweaver", text: "Dw" },
  {
    name: "Paint",
    art: (
      <>
        <path d="M2 14C1 7 8 2 14 4c5 1 7 5 4 7s-2 3-1 5c1 3-3 6-8 5-4-1-7-4-7-7z" fill="#d9e6f2" stroke="#8ca6bf" />
        <circle cx="6" cy="13" r="2" fill="#d93a2a" />
        <circle cx="8" cy="8" r="2" fill="#f1b521" />
        <circle cx="14" cy="7" r="2" fill="#3ba549" />
        <circle cx="9" cy="18" r="2" fill="#2e6fd6" />
        <path d="M23 3L12 17" stroke="#c9782a" strokeWidth="2.400" />
      </>
    ),
  },
  {
    name: "Notepad",
    art: (
      <>
        <path d="M8 3h14l-5 18H1z" fill="#8fcbd8" stroke="#4f93a6" />
        <path d="M8 3h14l-1 3H7z" fill="#d5e6ea" />
        <path d="M22 3v16l-5 3z" fill="#3e7484" />
      </>
    ),
  },
  {
    name: "Calculator",
    art: (
      <>
        <rect x="3" y="1" width="18" height="22" rx="1" fill="#9cc2e8" stroke="#dbe9f6" />
        <path d="M5 3h14v5H5z" fill="#e9f4fc" />
        <path d="M5 11h3M10 11h3M15 11h4M5 15h3M10 15h3M15 15h4M5 19h3M10 19h3M15 19h4" stroke="#fff" strokeWidth="2.200" />
      </>
    ),
  },
  {
    name: "Control Panel",
    art: (
      <>
        <rect x="1" y="2" width="23" height="15" rx="1" fill="#3a9ae0" stroke="#9ad0f4" />
        <circle cx="7" cy="9" r="4" fill="#f2c33c" />
        <path d="M7 9V5a4 4 0 0 1 4 4z" fill="#e4f2ff" />
        <path d="M14 6h3M19 6h3M14 11h3M19 11h3" stroke="#d7ecff" strokeWidth="2.500" />
        <path d="M7 22c0-5 11-5 11 0z" fill="#eef1f3" />
      </>
    ),
  },
  { name: "IMS", running: true, text: "IMS" },
];

function ProgramButton({ program }) {
  return (
    <button
      type="button"
      aria-label={program.name}
      className={clsx(
        "flex h-[25px] flex-1 items-center justify-center border-x",
        program.running && "border-white/70 bg-white/50",
        program.pinned && "border-white/25 bg-white/15",
        !program.running && !program.pinned && "border-transparent"
      )}
    >
      {program.text === "Dw" && (
        <span className="flex h-[17px] w-[18px] items-center justify-center border border-[#7cd420] bg-[#12300a] text-[10px] font-bold text-[#9cf02c]">
          Dw
        </span>
      )}
      {program.text === "IMS" && (
        <span className="grid place-items-center">
          <svg viewBox="0 0 24 24" className="col-start-1 row-start-1 size-[22px]">
            <circle cx="12" cy="12" r="9.500" fill="#f3e3da" stroke="#e05a22" strokeWidth="3" />
            <path d="M13 2h9l-3 4z" fill="#222" />
            <path d="M10 17h6l-1 6h-4z" fill="#f1d32c" />
          </svg>
          <span className="col-start-1 row-start-1 text-[11px] font-black text-[#1440c4]">IMS</span>
        </span>
      )}
      {program.art && (
        <svg viewBox="0 0 24 24" className="size-[20px]">
          {program.art}
        </svg>
      )}
    </button>
  );
}

function Taskbar() {
  return (
    <footer className="absolute inset-x-0 bottom-0 flex h-[25px] items-center justify-between bg-[#a08750]/80 pr-[15px] pl-[10px]">
      <div className="flex w-[580px]">
        {PROGRAMS.map((program) => (
          <ProgramButton key={program.name} program={program} />
        ))}
      </div>
      <div className="flex items-center gap-[8px] font-[family-name:'Liberation_Sans'] text-[7px]/[10px] text-white">
        <svg viewBox="0 0 52 12" className="h-[12px] w-[52px]" aria-hidden="true">
          <path d="M1 8l3-3 3 3z" fill="#fff" />
          <path d="M14 4h3v5h-3zM18 2h5v9h-5zM15 2v2" fill="none" stroke="#fff" strokeWidth="1.300" />
          <path d="M31 2h7v5h-7zM30 3v7M34 9h4" fill="none" stroke="#fff" strokeWidth="1.300" />
          <path d="M43 5h2l3-3v8l-3-3h-2z" fill="#fff" />
          <path d="M50 4v4" stroke="#fff" />
        </svg>
        <time className="text-center">
          9:51 PM
          <br />
          8/23/2013
        </time>
      </div>
    </footer>
  );
}

export default function App() {
  return (
    <div className="relative flex h-screen flex-col overflow-hidden bg-white font-[family-name:Roboto,'Liberation_Sans',sans-serif] text-[8px] text-[#111]">
      <header className="flex h-[14px] shrink-0 items-center bg-[#ebebeb] pl-px">
        <Glyph name="app" />
        <h1 className="flex-1 pl-[50px] text-center font-[family-name:'Open_Sans'] text-[9px]/[14px] whitespace-pre text-[#333]">
          {"IMS (IMS, Psychiatric)    (Patient: AARON, JOHN W (9851) 04/09/1979 - M- Age: 34y 4m)"}
        </h1>
        <div className="flex h-full items-start">
          <button type="button" aria-label="minimize" className="flex h-[12px] w-[16px] items-center justify-center">
            <span className="mt-[3px] h-[2px] w-[5px] bg-[#333]" />
          </button>
          <button type="button" aria-label="restore" className="flex h-[12px] w-[17px] items-center justify-center">
            <svg viewBox="0 0 8 8" className="size-[8px]">
              <path d="M1 3h5v4H1zM3 3V1h5v4H6" fill="none" stroke="#333" />
            </svg>
          </button>
          <button type="button" aria-label="close" className="h-[12px] w-[29px] bg-[#bcbcbc] text-[9px]/[11px] font-bold text-white">
            ×
          </button>
        </div>
      </header>
      <nav className="flex h-[12px] shrink-0 items-center gap-[11px] pl-[6px] font-[family-name:'Liberation_Sans'] text-[7px] text-[#333]">
        {MENUS.map((menu) => (
          <a key={menu} href="#">
            {menu}
          </a>
        ))}
      </nav>
      <div className="flex h-[34px] shrink-0 flex-col gap-px border-t border-[#ececec]">
        <Toolbar groups={MAIN_TOOLS} />
        <Toolbar groups={NOTE_TOOLS} active="edit" />
      </div>
      <main className="flex min-h-0 flex-1 bg-[#8d949c] px-px pb-px">
        <ChartWindow />
      </main>
      <div className="flex h-[13px] shrink-0 items-center justify-between bg-[#f0f0f0] pr-[23px] pl-[2px] font-[family-name:'Liberation_Sans'] text-[7px] text-[#222]">
        <span>Ready</span>
        <span className="flex items-center gap-[4px]">
          0050335
          <span className="h-[10px] border-l border-[#aaa]" />
          <Glyph name="sign" className="size-[10px]" />
          <span className="pl-[13px]">08/23/2013</span>
        </span>
      </div>
      <div className="h-[25px] shrink-0 bg-[#ff8787]" />
      <CopyDialog />
      <Taskbar />
    </div>
  );
}
